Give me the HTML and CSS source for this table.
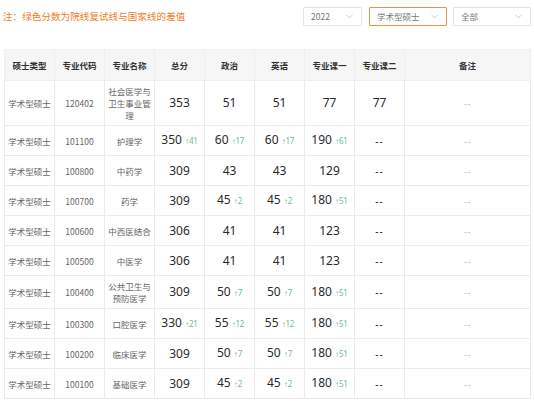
FILE: index.html
```html
<!DOCTYPE html>
<html lang="zh">
<head>
<meta charset="utf-8">
<link rel="stylesheet" href="styles.css">
</head>
<body>
<div class="top">
  <div class="note">注：绿色分数为院线复试线与国家线的差值</div>
  <div class="filters">
    <div class="sel w-year"><span>2022</span><svg class="chev" width="7" height="5" viewBox="0 0 7 5"><path d="M0.5 0.8 L3.5 4 L6.5 0.8" fill="none" stroke="#c6c9cf" stroke-width="0.9"/></svg></div>
    <div class="sel w-type active"><span>学术型硕士</span><svg class="chev" width="7" height="5" viewBox="0 0 7 5"><path d="M0.5 0.8 L3.5 4 L6.5 0.8" fill="none" stroke="#c6c9cf" stroke-width="0.9"/></svg></div>
    <div class="sel w-all"><span>全部</span><svg class="chev" width="7" height="5" viewBox="0 0 7 5"><path d="M0.5 0.8 L3.5 4 L6.5 0.8" fill="none" stroke="#c6c9cf" stroke-width="0.9"/></svg></div>
  </div>
</div>
<table class="scores">
  <colgroup>
    <col class="c"><col class="c"><col class="c"><col class="c"><col class="c"><col class="c"><col class="c"><col class="c"><col class="cl">
  </colgroup>
  <thead>
    <tr><th>硕士类型</th><th>专业代码</th><th>专业名称</th><th>总分</th><th>政治</th><th>英语</th><th>专业课一</th><th>专业课二</th><th>备注</th></tr>
  </thead>
  <tbody>
    <tr class="r3"><td>学术型硕士</td><td>120402</td><td class="name">社会医学与卫生事业管理</td><td class="n">353</td><td class="n">51</td><td class="n">51</td><td class="n">77</td><td class="n">77</td><td class="rm">--</td></tr>
    <tr><td>学术型硕士</td><td>101100</td><td class="name">护理学</td><td class="n">350 <i>↑41</i></td><td class="n">60 <i>↑17</i></td><td class="n">60 <i>↑17</i></td><td class="n">190 <i>↑61</i></td><td class="n dd">--</td><td class="rm">--</td></tr>
    <tr><td>学术型硕士</td><td>100800</td><td class="name">中药学</td><td class="n">309</td><td class="n">43</td><td class="n">43</td><td class="n">129</td><td class="n dd">--</td><td class="rm">--</td></tr>
    <tr><td>学术型硕士</td><td>100700</td><td class="name">药学</td><td class="n">309</td><td class="n">45 <i>↑2</i></td><td class="n">45 <i>↑2</i></td><td class="n">180 <i>↑51</i></td><td class="n dd">--</td><td class="rm">--</td></tr>
    <tr><td>学术型硕士</td><td>100600</td><td class="name">中西医结合</td><td class="n">306</td><td class="n">41</td><td class="n">41</td><td class="n">123</td><td class="n dd">--</td><td class="rm">--</td></tr>
    <tr><td>学术型硕士</td><td>100500</td><td class="name">中医学</td><td class="n">306</td><td class="n">41</td><td class="n">41</td><td class="n">123</td><td class="n dd">--</td><td class="rm">--</td></tr>
    <tr><td>学术型硕士</td><td>100400</td><td class="name">公共卫生与预防医学</td><td class="n">309</td><td class="n">50 <i>↑7</i></td><td class="n">50 <i>↑7</i></td><td class="n">180 <i>↑51</i></td><td class="n dd">--</td><td class="rm">--</td></tr>
    <tr><td>学术型硕士</td><td>100300</td><td class="name">口腔医学</td><td class="n">330 <i>↑21</i></td><td class="n">55 <i>↑12</i></td><td class="n">55 <i>↑12</i></td><td class="n">180 <i>↑51</i></td><td class="n dd">--</td><td class="rm">--</td></tr>
    <tr><td>学术型硕士</td><td>100200</td><td class="name">临床医学</td><td class="n">309</td><td class="n">50 <i>↑7</i></td><td class="n">50 <i>↑7</i></td><td class="n">180 <i>↑51</i></td><td class="n dd">--</td><td class="rm">--</td></tr>
    <tr><td>学术型硕士</td><td>100100</td><td class="name">基础医学</td><td class="n">309</td><td class="n">45 <i>↑2</i></td><td class="n">45 <i>↑2</i></td><td class="n">180 <i>↑51</i></td><td class="n dd">--</td><td class="rm">--</td></tr>
  </tbody>
</table>
</body>
</html>
```

FILE: styles.css
```css
html, body {
  margin: 0;
  padding: 0;
  background: #fff;
}
body {
  font-family: "Noto Sans CJK SC", "Noto Sans", sans-serif;
  color: #666;
}
.top {
  height: 31px;
  margin-bottom: 18px;
  padding: 0 3px;
  display: flex;
  align-items: center;
  justify-content: space-between;
}
.note {
  font-size: 9.5px;
  color: #f07c24;
  letter-spacing: 0.1px;
}
.filters {
  display: flex;
  gap: 6px;
  padding-top: 1px;
}
.sel {
  box-sizing: border-box;
  height: 19px;
  border: 1px solid #e3e4e8;
  border-radius: 1px;
  display: flex;
  align-items: center;
  justify-content: space-between;
  padding: 0 8px 0 7px;
  font-size: 8.5px;
  color: #777;
}
.sel.active {
  border-color: #f0913f;
}
.w-year { width: 59px; }
.w-type { width: 78px; margin-left: 1px; }
.w-all { width: 78px; }
.chev { display: block; }

.scores {
  margin-left: 4px;
  width: 527px;
  table-layout: fixed;
  border-collapse: collapse;
  border: 1px solid #e8e8e8;
}
col.c { width: 50px; }
.scores th,
.scores td {
  border: 1px solid #ebebeb;
  text-align: center;
  vertical-align: middle;
  padding: 4px 3px;
  font-size: 8.5px;
  line-height: 12px;
}
.scores th {
  height: 22px;
  background: #f6f6f6;
  color: #333;
  font-weight: 700;
  border-color: #efefef;
}
.scores tbody tr { height: 30px; }
.scores td { color: #666; }
.scores td.name { color: #666; }
.scores td.n {
  font-family: "Noto Sans", "Open Sans", sans-serif;
  font-size: 12px;
  font-weight: 400;
  color: #2a2a2a;
  white-space: nowrap;
  padding: 0;
}
.scores td.n i {
  font-style: normal;
  font-size: 8px;
  color: #6dba94;
  letter-spacing: -0.2px;
}
.scores td.dd {
  font-weight: 400;
  font-size: 10px;
  letter-spacing: 1px;
  color: #222;
}
.scores td.rm {
  color: #a8a8a8;
  font-size: 8.5px;
  letter-spacing: 0.5px;
}
```
